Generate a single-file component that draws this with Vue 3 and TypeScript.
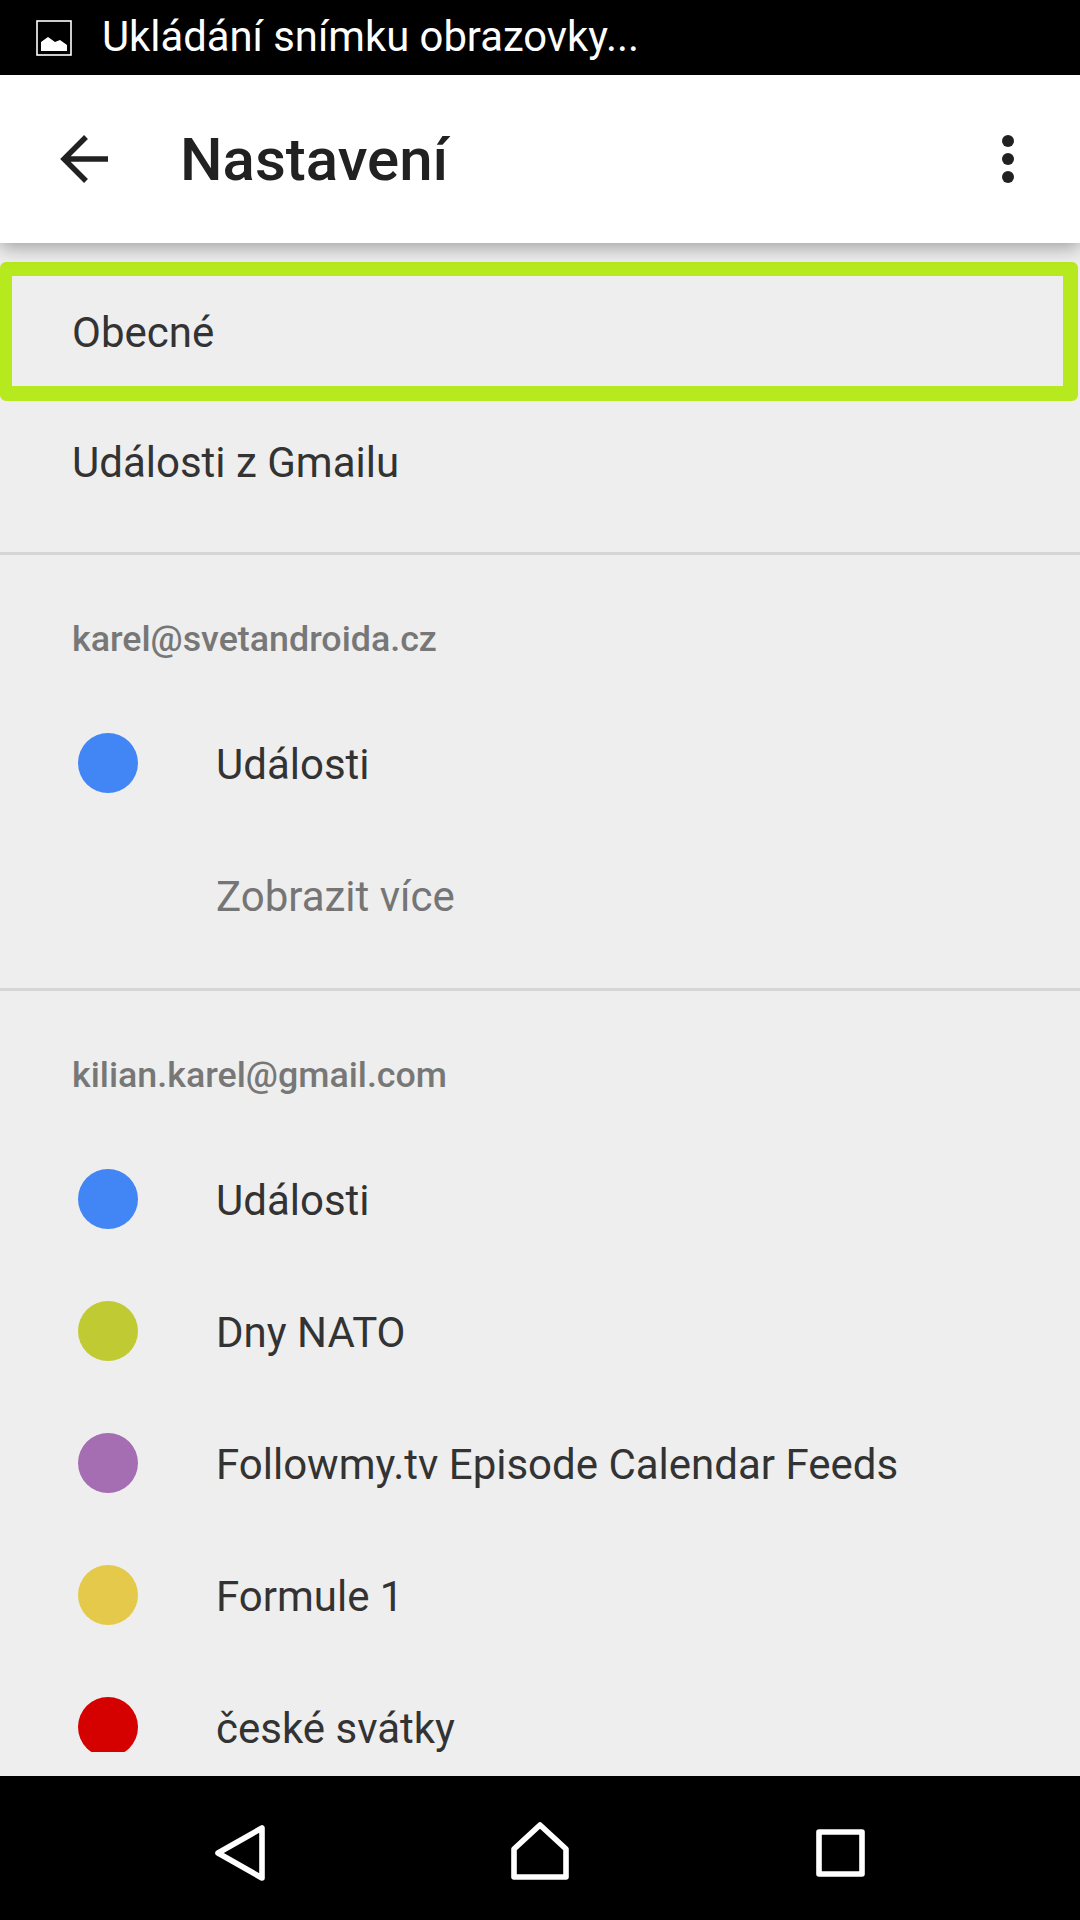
<template>
  <div class="screen">
    <div class="status-bar">
      <svg class="status-icon" viewBox="0 0 36 36">
        <rect x="1" y="1" width="34" height="34" fill="none" stroke="#fff" stroke-width="1.6" />
        <path d="M5 31V22L12 17L19 22L24 20L31 25V31Z" fill="#fff" />
      </svg>
      <span class="status-text">Ukládání snímku obrazovky...</span>
    </div>

    <header class="toolbar">
      <svg class="back-icon" viewBox="0 0 48 48">
        <path d="M48 24H4M26 2L4 24L26 46" fill="none" stroke="#212121" stroke-width="5.4" />
      </svg>
      <h1>Nastavení</h1>
      <div class="more">
        <i></i><i></i><i></i>
      </div>
    </header>

    <main class="content">
      <div class="list">
        <div class="top-links">
          <div class="link highlighted">Obecné</div>
          <div class="link">Události z Gmailu</div>
        </div>

        <section v-for="account in accounts" :key="account.email" class="account">
          <div class="email">{{ account.email }}</div>
          <div v-for="cal in account.calendars" :key="cal.name" class="row">
            <span class="dot" :style="{ background: cal.color }"></span>
            <span class="name">{{ cal.name }}</span>
          </div>
          <div v-if="account.more" class="row more-row">
            <span class="name">Zobrazit více</span>
          </div>
        </section>
      </div>
    </main>

    <nav class="nav-bar">
      <svg class="nav-back" viewBox="0 0 50 56">
        <path d="M47 3V53L3 28Z" fill="none" stroke="#fff" stroke-width="5.6" stroke-linejoin="round" />
      </svg>
      <svg class="nav-home" viewBox="0 0 58 58">
        <path d="M29 3L55 27V55H3V27Z" fill="none" stroke="#fff" stroke-width="5.6" stroke-linejoin="round" />
      </svg>
      <svg class="nav-recent" viewBox="0 0 49 48">
        <rect x="3" y="3" width="43" height="42" fill="none" stroke="#fff" stroke-width="5.6" stroke-linejoin="round" />
      </svg>
    </nav>
  </div>
</template>

<script setup lang="ts">
interface Calendar {
  name: string;
  color: string;
}

interface Account {
  email: string;
  calendars: Calendar[];
  more: boolean;
}

const accounts: Account[] = [
  {
    email: 'karel@svetandroida.cz',
    calendars: [{ name: 'Události', color: '#4285f4' }],
    more: true,
  },
  {
    email: 'kilian.karel@gmail.com',
    calendars: [
      { name: 'Události', color: '#4285f4' },
      { name: 'Dny NATO', color: '#c0ca33' },
      { name: 'Followmy.tv Episode Calendar Feeds', color: '#a56db2' },
      { name: 'Formule 1', color: '#e4c94b' },
      { name: 'české svátky', color: '#d50000' },
    ],
    more: false,
  },
];
</script>

<style scoped>
.screen {
  width: 1080px;
  height: 1920px;
  display: flex;
  flex-direction: column;
  overflow: hidden;
  background: #eeeeee;
  font-family: Roboto, "Noto Sans", sans-serif;
}

.status-bar {
  height: 75px;
  flex-shrink: 0;
  background: #000;
  display: flex;
  align-items: center;
  padding-left: 36px;
  color: #fff;
}

.status-icon {
  width: 36px;
  height: 36px;
  margin-right: 30px;
}

.status-text {
  font-size: 41.8px;
  padding-bottom: 2px;
}

.toolbar {
  height: 168px;
  flex-shrink: 0;
  background: #fff;
  display: flex;
  align-items: center;
  padding: 0 66px 0 60px;
  box-shadow: 0 4px 18px rgba(0, 0, 0, 0.35);
  position: relative;
  z-index: 2;
}

.back-icon {
  width: 48px;
  height: 48px;
  margin-right: 72px;
}

.toolbar h1 {
  margin: 0;
  flex: 1;
  font-size: 60px;
  font-weight: 500;
  color: #212121;
}

.more {
  display: flex;
  flex-direction: column;
  gap: 6px;
}

.more i {
  display: block;
  width: 12px;
  height: 12px;
  border-radius: 50%;
  background: #212121;
}

.content {
  flex: 1;
  min-height: 0;
  display: flex;
  flex-direction: column;
  padding-top: 19px;
  padding-bottom: 24px;
  color: #333;
}

.list {
  flex: 1;
  min-height: 0;
  overflow: hidden;
}

.top-links {
  padding-bottom: 24px;
}

.link {
  height: 132px;
  display: flex;
  align-items: center;
  padding-left: 72px;
  font-size: 42px;
}

.highlighted {
  height: 139px;
  width: 1078px;
  box-sizing: border-box;
  padding-left: 60px;
  padding-top: 3px;
  border-style: solid;
  border-color: #b7e91f;
  border-width: 14px 15px 15px 12px;
  border-radius: 6px;
  margin-bottom: -5px;
}

.account {
  border-top: 3px solid #d5d5d5;
  padding-top: 24px;
  padding-bottom: 27px;
}

.email {
  height: 118px;
  display: flex;
  align-items: center;
  padding-left: 72px;
  padding-top: 1px;
  box-sizing: border-box;
  font-size: 35.8px;
  font-weight: 500;
  color: #777;
}

.row {
  height: 132px;
  display: flex;
  align-items: center;
  padding-left: 78px;
  font-size: 42px;
}

.name {
  padding-top: 2px;
}

.dot {
  width: 60px;
  height: 60px;
  border-radius: 50%;
  margin-right: 78px;
}

.more-row {
  padding-left: 216px;
  color: #757575;
}

.nav-bar {
  height: 144px;
  flex-shrink: 0;
  box-sizing: border-box;
  background: #000;
  display: grid;
  grid-template-columns: repeat(3, 300px);
  justify-items: center;
  align-items: center;
  padding: 10px 90px 0;
}

.nav-back {
  width: 50px;
  height: 56px;
}

.nav-home {
  width: 58px;
  height: 58px;
  margin-top: -4px;
}

.nav-recent {
  width: 49px;
  height: 48px;
}
</style>

<style>
html,
body {
  margin: 0;
  padding: 0;
}
</style>
